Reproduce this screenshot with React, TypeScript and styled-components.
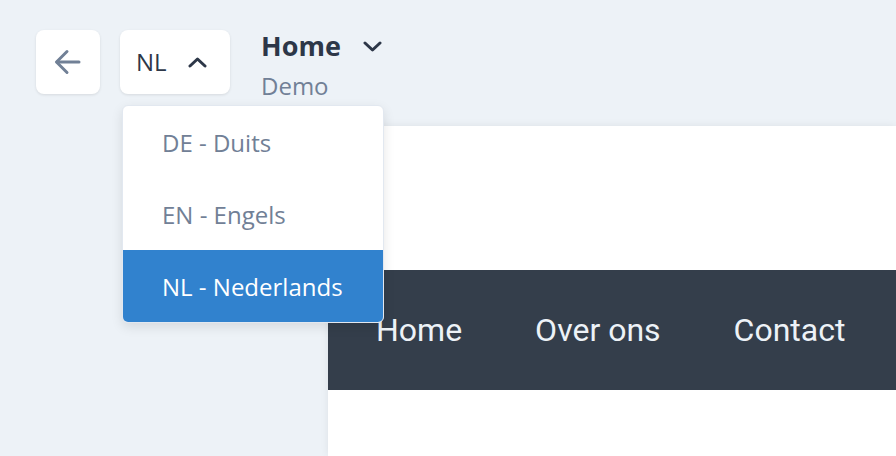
import styled, { createGlobalStyle } from 'styled-components';

const languages: { code: string; name: string }[] = [
  { code: 'DE', name: 'Duits' },
  { code: 'EN', name: 'Engels' },
  { code: 'NL', name: 'Nederlands' },
];

const current = 'NL';

const navItems = ['Home', 'Over ons', 'Contact'];

const GlobalStyle = createGlobalStyle`
  html, body {
    margin: 0;
    padding: 0;
    background: #edf2f7;
    font-family: 'Open Sans', 'Liberation Sans', sans-serif;
    overflow: hidden;
  }
`;

const Page = styled.div`
  width: 896px;
  height: 456px;
  display: flex;
  flex-direction: column;
  overflow: hidden;
`;

const Header = styled.div`
  height: 126px;
  box-sizing: border-box;
  padding: 30px 0 0 36px;
  display: flex;
  align-items: flex-start;
  flex-shrink: 0;
`;

const IconButton = styled.button`
  width: 64px;
  height: 64px;
  border: none;
  border-radius: 8px;
  background: #ffffff;
  box-shadow: 0 1px 3px rgba(0, 0, 0, 0.1);
  display: flex;
  align-items: center;
  justify-content: center;
  padding: 0;
  color: #718096;
`;

const LangWrapper = styled.div`
  position: relative;
  margin-left: 20px;
`;

const LangButton = styled.button`
  width: 110px;
  height: 64px;
  border: none;
  border-radius: 8px;
  background: #ffffff;
  box-shadow: 0 1px 3px rgba(0, 0, 0, 0.1);
  display: flex;
  align-items: center;
  padding: 0 0 0 16px;
  gap: 21px;
  font-family: inherit;
  font-size: 24px;
  line-height: 32px;
  color: #2d3748;
`;

const Dropdown = styled.ul`
  position: absolute;
  top: 75px;
  left: 2px;
  width: 260px;
  margin: 0;
  padding: 0;
  list-style: none;
  background: #ffffff;
  border: 1px solid #e2e8f0;
  border-radius: 6px;
  box-shadow: 0 4px 12px rgba(0, 0, 0, 0.1);
  overflow: hidden;
  z-index: 10;
`;

const Option = styled.li<{ $active?: boolean }>`
  height: 72px;
  box-sizing: border-box;
  padding: 1px 0 0 39px;
  display: flex;
  align-items: center;
  font-size: 24px;
  line-height: 32px;
  color: ${(p) => (p.$active ? '#ffffff' : '#718096')};
  background: ${(p) => (p.$active ? '#3182ce' : 'transparent')};
`;

const TitleBlock = styled.div`
  margin-left: 31px;
  display: flex;
  flex-direction: column;
`;

const TitleRow = styled.div`
  display: flex;
  align-items: center;
  gap: 22px;
  color: #2d3748;
`;

const Title = styled.span`
  font-size: 27px;
  line-height: 32px;
  font-weight: 700;
`;

const Subtitle = styled.span`
  margin-top: 8px;
  font-size: 24px;
  line-height: 32px;
  color: #718096;
`;

const Body = styled.div`
  flex: 1;
  display: flex;
`;

const Gutter = styled.div`
  width: 328px;
  flex-shrink: 0;
`;

const Preview = styled.div`
  flex: 1;
  background: #ffffff;
  box-shadow: 0 0 8px rgba(0, 0, 0, 0.07);
  padding-top: 144px;
`;

const Nav = styled.nav`
  height: 120px;
  background: #343e4b;
  display: flex;
  align-items: center;
  padding-left: 48px;
  gap: 73px;
`;

const NavLink = styled.span`
  font-family: Roboto, 'Liberation Sans', sans-serif;
  font-size: 32px;
  color: #edf2f7;
  white-space: nowrap;
`;

const Chevron = ({ up }: { up?: boolean }) => (
  <svg width="19" height="11" viewBox="0 0 19 11" fill="none">
    <polyline
      points={up ? '2,9 9.5,2 17,9' : '2,2 9.5,9 17,2'}
      stroke="currentColor"
      strokeWidth="3"
      strokeLinecap="round"
      strokeLinejoin="round"
    />
  </svg>
);

const App = () => {
  return (
    <Page>
      <GlobalStyle />
      <Header>
        <IconButton aria-label="Terug">
          <svg width="28" height="26" viewBox="0 0 28 26" fill="none">
            <polyline
              points="13,2.5 2.5,13 13,23.5"
              stroke="currentColor"
              strokeWidth="3"
              strokeLinecap="round"
              strokeLinejoin="round"
            />
            <line x1="3" y1="13" x2="25" y2="13" stroke="currentColor" strokeWidth="3" strokeLinecap="round" />
          </svg>
        </IconButton>
        <LangWrapper>
          <LangButton>
            {current}
            <Chevron up />
          </LangButton>
          <Dropdown>
            {languages.map((l) => (
              <Option key={l.code} $active={l.code === current}>
                {l.code} - {l.name}
              </Option>
            ))}
          </Dropdown>
        </LangWrapper>
        <TitleBlock>
          <TitleRow>
            <Title>Home</Title>
            <Chevron />
          </TitleRow>
          <Subtitle>Demo</Subtitle>
        </TitleBlock>
      </Header>
      <Body>
        <Gutter />
        <Preview>
          <Nav>
            {navItems.map((n) => (
              <NavLink key={n}>{n}</NavLink>
            ))}
          </Nav>
        </Preview>
      </Body>
    </Page>
  );
};

export default App;
